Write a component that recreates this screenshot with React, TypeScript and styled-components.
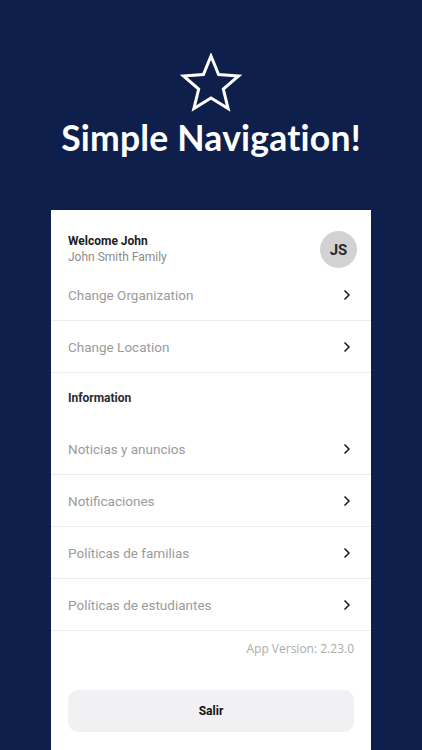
import React from "react";
import styled, { createGlobalStyle } from "styled-components";

const GlobalStyle = createGlobalStyle`
  html, body {
    margin: 0;
    padding: 0;
    background: #0f1f4c;
  }
  * {
    box-sizing: border-box;
  }
`;

const Page = styled.div`
  width: 422px;
  height: 750px;
  overflow: hidden;
  background: #0f1f4c;
  display: flex;
  flex-direction: column;
  align-items: center;
`;

const Hero = styled.header`
  display: flex;
  flex-direction: column;
  align-items: center;
  padding-top: 53px;
  height: 210px;
`;

const Title = styled.h1`
  margin: 4px 0 0;
  font-family: Lato, "Open Sans", sans-serif;
  font-weight: 700;
  font-size: 35.5px;
  line-height: 42px;
  color: #ffffff;
  letter-spacing: 0.2px;
`;

const Card = styled.section`
  width: 320px;
  flex: 1;
  background: #ffffff;
  display: flex;
  flex-direction: column;
  font-family: Roboto, "Noto Sans", sans-serif;
`;

const Profile = styled.div`
  display: flex;
  align-items: center;
  justify-content: space-between;
  padding: 21px 14px 1px 17px;
`;

const Names = styled.div`
  display: flex;
  flex-direction: column;
  gap: 1px;
`;

const Welcome = styled.span`
  font-size: 12px;
  font-weight: 700;
  color: #222222;
  line-height: 15px;
`;

const Family = styled.span`
  font-size: 12px;
  color: #8c8c8c;
  line-height: 15px;
`;

const Avatar = styled.div`
  width: 37px;
  height: 37px;
  border-radius: 50%;
  background: #d2d2d2;
  display: flex;
  align-items: center;
  justify-content: center;
  font-size: 15px;
  font-weight: 700;
  color: #2a2a2a;
`;

const Row = styled.div<{ $divider?: boolean }>`
  height: 52px;
  display: flex;
  align-items: center;
  justify-content: space-between;
  padding: 0 20px 0 17px;
  border-bottom: ${(p) => (p.$divider ? "1px solid #ececee" : "none")};
  font-size: 13.5px;
  color: #9b9b9b;
`;

const Section = styled.div`
  height: 50px;
  display: flex;
  align-items: center;
  padding: 0 17px;
  font-size: 12px;
  font-weight: 700;
  color: #2a2a33;
`;

const Version = styled.div`
  text-align: right;
  padding: 9px 17px 0;
  font-family: "Open Sans", sans-serif;
  font-size: 12px;
  color: #ababab;
`;

const LogoutButton = styled.button`
  margin: 33px 17px 0;
  height: 42px;
  border: none;
  border-radius: 10px;
  background: #f1f1f4;
  font-family: Roboto, sans-serif;
  font-size: 12px;
  font-weight: 700;
  color: #111111;
`;

const Star = () => (
  <svg width="62" height="60" viewBox="0 0 62 60" fill="none">
    <path
      d="M31 3 L38.6 21.6 L58.6 23 L43.3 36 L48.1 55.6 L31 45 L13.9 55.6 L18.7 36 L3.4 23 L23.4 21.6 Z"
      stroke="#ffffff"
      strokeWidth="3"
      strokeLinejoin="miter"
    />
  </svg>
);

const Chevron = () => (
  <svg width="8" height="12" viewBox="0 0 8 12" fill="none">
    <path d="M1.5 1.5 L6 6 L1.5 10.5" stroke="#1a1a1a" strokeWidth="1.5" />
  </svg>
);

const accountItems = ["Change Organization", "Change Location"];
const infoItems = [
  "Noticias y anuncios",
  "Notificaciones",
  "Políticas de familias",
  "Políticas de estudiantes",
];

export default function App() {
  return (
    <Page>
      <GlobalStyle />
      <Hero>
        <Star />
        <Title>Simple Navigation!</Title>
      </Hero>
      <Card>
        <Profile>
          <Names>
            <Welcome>Welcome John</Welcome>
            <Family>John Smith Family</Family>
          </Names>
          <Avatar>JS</Avatar>
        </Profile>
        {accountItems.map((label) => (
          <Row key={label} $divider>
            {label}
            <Chevron />
          </Row>
        ))}
        <Section>Information</Section>
        {infoItems.map((label) => (
          <Row key={label} $divider>
            {label}
            <Chevron />
          </Row>
        ))}
        <Version>App Version: 2.23.0</Version>
        <LogoutButton>Salir</LogoutButton>
      </Card>
    </Page>
  );
}
